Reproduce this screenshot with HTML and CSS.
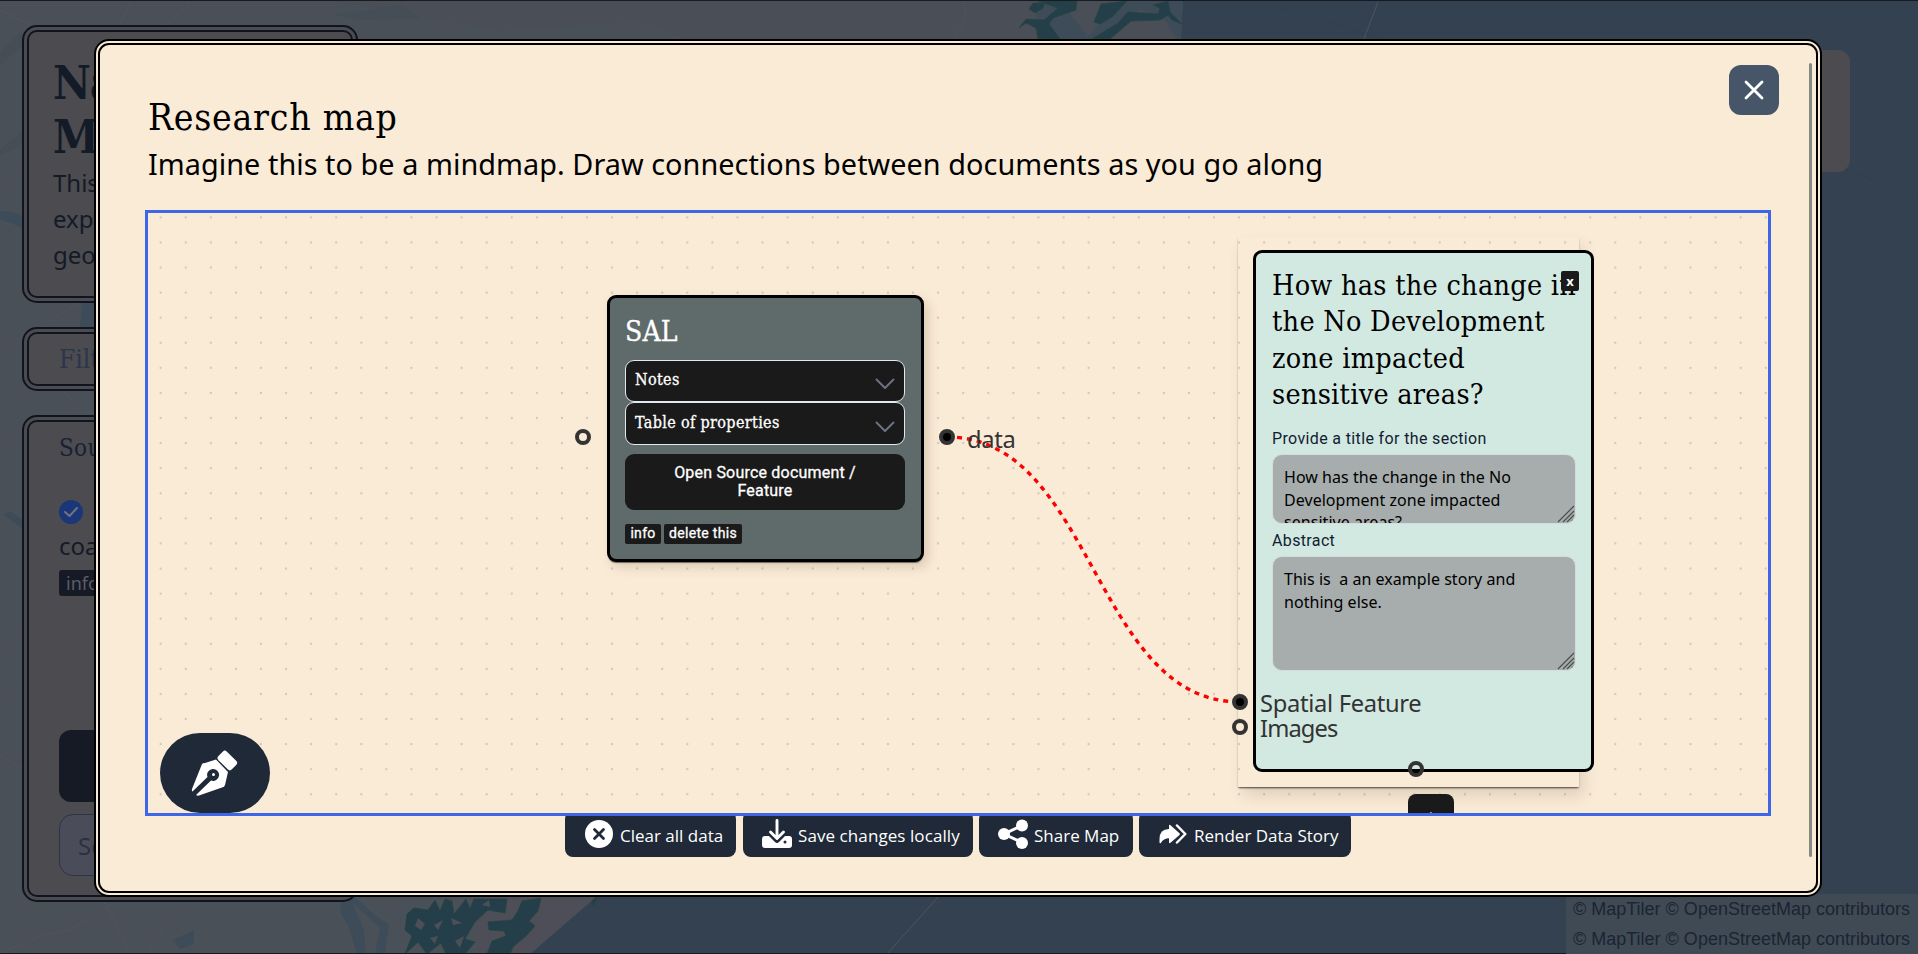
FILE: index.html
```html
<!DOCTYPE html>
<html lang="en">
<head>
<meta charset="utf-8">
<title>Research map</title>
<link rel="stylesheet" href="styles.css">
</head>
<body>
<div class="page">
  <svg class="basemap" viewBox="0 0 1918 954" aria-hidden="true">
    <rect width="1918" height="954" fill="#334150"/>
    <path d="M0 0H1183L1180 60L900 500L596 897L530 954H0Z" fill="#495058"/>
    <path d="M330 0H1183L1180 45H700L640 20L500 30Z" fill="#4a4e56"/>
    <path d="M470 897H596L530 954H480Z" fill="#4d4e57"/>
    <g fill="#3d4c58">
      <path d="M1035 5L1060 0L1090 40H1040ZM1140 10L1100 40H1085L1120 0H1183L1180 45L1165 20Z"/>
      <path d="M340 905L352 895L375 915L389 925L385 954H357L348 925L341 914Z"/>
      <path d="M173 940L194 930V944L180 949Z"/>
      <path d="M0 211Q14 210 23 217V229Q12 222 0 220ZM82 303H94V327H80ZM4 515L10 511L23 520V529Z"/>
    </g>
    <path d="M0 52L23 30V45L0 65ZM332 15L400 5L420 18L360 20ZM0 150L23 130V145L0 155Z" fill="#454e56"/>
    <path d="M352 902L380 928L375 954H366L364 930Z" fill="#4a5058"/>
    <g fill="#243f49" stroke="#25463f" stroke-width=".8">
      <path d="M1033 3H1045L1042 9L1035 13L1029 9ZM1038 1H1077L1076 10L1053 18L1049 24L1060 39H1038L1036 28L1026 23L1019 28L1026 19L1044 20L1058 8ZM1101 4L1119 2L1127 1L1112 17L1100 24L1094 22ZM1128 12L1158 14L1160 8L1153 5L1168 1L1170 12L1182 24L1172 20L1168 15L1160 20L1131 21L1110 39H1092L1118 23Z"/>
      <path d="M407 914L414 908L428 910L435 900L440 911L445 899L452 901L454 914L466 899L470 909L474 899H507L505 913L488 910L475 922L465 939L475 942L465 954H446L441 943L427 954L418 942L405 954L412 936L405 930ZM522 901L541 898L538 911L529 921L535 926L526 936L513 947L510 954H487L492 941L506 936L504 931L489 930L488 922L512 920L518 911ZM591 902L597 896L594 906Z"/>
    </g>
    <g fill="#4b5058"><path d="M418 918L425 924L421 930L415 926ZM434 925L443 920L438 930ZM451 918L462 923L453 925ZM455 941L464 936L460 948ZM430 938L438 936L435 944ZM482 905L489 900L490 907Z"/></g>
    <g fill="none" stroke="#53525d" stroke-width="1">
      <path d="M0 954Q40 933 70 930Q95 915 115 902M105 902L129 952M146 954L182 903M0 660L10 648L22 630M0 700L23 684M0 754L10 762L23 768M0 190L22 165M0 350L80 303M65 392L80 410M0 10L30 25M120 24L131 1M165 25Q185 12 190 0M0 450L23 430M963 0L966 18L955 39"/>
      <path d="M1378 2L1364 39M938 897L887 954"/>
    </g>
    <path d="M1280 8L1420 50M1846 170L1918 196" stroke="#2d3e4c" stroke-dasharray="2 3"/>
    <path d="M0 .5H1918M0 953.5H1918" stroke="#171a20"/>
  </svg>

  <aside class="sidebar">
    <section class="panel panel-intro">
      <h1>Na<br>M</h1>
      <p>This<br>exp<br>geo</p>
    </section>
    <section class="panel panel-filter"><span>Filt</span></section>
    <section class="panel panel-sources">
      <h2>Sou</h2>
      <svg class="check" viewBox="0 0 24 24"><circle cx="12" cy="12" r="12" fill="#1b3779"/><path d="M6 12L10.5 16L18 8" fill="none" stroke="#72737c" stroke-width="2" stroke-linecap="round" stroke-linejoin="round"/></svg>
      <p>coa</p>
      <span class="tag">info</span>
      <div class="block"></div>
      <div class="field">Se</div>
    </section>
  </aside>
  <div class="side-card"></div>
  <div class="attribution"><span>© MapTiler © OpenStreetMap contributors</span><span>© MapTiler © OpenStreetMap contributors</span></div>

  <main class="modal">
    <header class="modal-head">
      <h2>Research map</h2>
      <p>Imagine this to be a mindmap. Draw connections between documents as you go along</p>
    </header>
    <button class="close" aria-label="Close"><svg viewBox="0 0 50 50"><path d="M17 17L33 33M33 17L17 33" stroke="#fff" stroke-width="2.8" stroke-linecap="round"/></svg></button>
    <div class="scrollbar"></div>

    <div class="canvas">
      <svg class="dots" width="1620" height="600">
        <defs><pattern id="dot" x="0.15" y="-8.15" width="25.08" height="25.08" patternUnits="userSpaceOnUse"><circle cx="12.5" cy="12.5" r="1.15" fill="#d4c7ba"/></pattern></defs>
        <rect width="1620" height="600" fill="url(#dot)"/>
      </svg>

      <div class="story-wrap"></div>
      <svg class="edges" width="1620" height="600"><path d="M799 224C945.500 224 945.500 489 1092 489" fill="none" stroke="#f00" stroke-width="3.4" stroke-dasharray="5"/></svg>

      <article class="node sal">
        <h3>SAL</h3>
        <div class="fold"><span>Notes</span><svg viewBox="0 0 20 12"><path d="M1.500 1.500L10 10L18.500 1.500"/></svg></div>
        <div class="fold"><span>Table of properties</span><svg viewBox="0 0 20 12"><path d="M1.500 1.500L10 10L18.500 1.500"/></svg></div>
        <button class="open">Open Source document /<br>Feature</button>
        <div class="chips"><span class="chip">info</span><span class="chip chip-delete">delete this</span></div>
      </article>

      <article class="node story">
        <h3>How has the change in<br>the No Development<br>zone impacted<br>sensitive areas?</h3>
        <button class="remove">x</button>
        <label>Provide a title for the section</label>
        <div class="area area-title">How has the change in the No<br>Development zone impacted<br>sensitive areas?<svg viewBox="0 0 18 18"><path d="M1 17L17 1M6 17L17 6M10 17L17 10M14 17L17 14"/></svg></div>
        <label>Abstract</label>
        <div class="area area-abstract">This is&nbsp; a an example story and<br>nothing else.<svg viewBox="0 0 18 18"><path d="M1 17L17 1M6 17L17 6M10 17L17 10M14 17L17 14"/></svg></div>
      </article>

      <i class="handle h-in"></i>
      <i class="handle h-out linked"></i>
      <i class="handle h-spatial linked"></i>
      <i class="handle h-images"></i>
      <i class="handle h-bottom"></i>
      <span class="port p-data">data</span>
      <span class="port p-spatial">Spatial Feature</span>
      <span class="port p-images">Images</span>
      <button class="add">+</button>

      <button class="pen" aria-label="Draw">
        <svg viewBox="0 0 110 80"><g fill="#fff"><path d="M42 31Q43 30 45 30L56 26.500L68 39L65 52Q64.500 54 62 54.500L39 62.500Q36 63 36.500 61.500L51 47.500A6 6 0 1 0 47.500 44L33 58Q31.500 59.500 32 56Z"/><rect x="-9.500" y="-6" width="19" height="12" rx="3" transform="translate(67.300 27.500) rotate(45)"/><circle cx="53.500" cy="41.500" r="1.500"/></g></svg>
      </button>
    </div>

    <nav class="toolbar">
      <button class="tool t-clear"><svg viewBox="0 0 28 28"><circle cx="14" cy="14" r="14" fill="#fff"/><path d="M9.500 9.500L18.500 18.500M18.500 9.500L9.500 18.500" stroke="#1f2937" stroke-width="2.800" stroke-linecap="round"/></svg><span>Clear all data</span></button>
      <button class="tool t-save"><svg viewBox="0 0 30 30"><path d="M3 17H7L13 23Q15 25 17 23L23 17H27Q30 17 30 20V26Q30 29 27 29H3Q0 29 0 26V20Q0 17 3 17Z" fill="#fff"/><path d="M15 1.500V19M8.500 13L15 19.500L21.500 13" fill="none" stroke="#1f2937" stroke-width="6"/><path d="M15 1.500V19M8.500 13L15 19.500L21.500 13" fill="none" stroke="#fff" stroke-width="2.900" stroke-linecap="round" stroke-linejoin="round"/><circle cx="23" cy="23" r="1.500" fill="#1f2937"/></svg><span>Save changes locally</span></button>
      <button class="tool t-share"><svg viewBox="0 0 30 30"><path d="M24 6.500L6 15L24 23.500" fill="none" stroke="#fff" stroke-width="3"/><g fill="#fff"><circle cx="24" cy="6.500" r="6"/><circle cx="6" cy="15" r="6"/><circle cx="24" cy="24" r="6"/></g></svg><span>Share Map</span></button>
      <button class="tool t-render"><svg viewBox="0 0 28 28"><path d="M.5 22.500V19Q.5 9 10 9V5.800Q10 4 11.500 5.200L20.500 13.200Q21.300 14 20.500 14.900L11.500 22.800Q10 24 10 22V18.300Q4.500 18.300 2 22.800Q.8 24 .5 22.500Z" fill="#fff"/><path d="M18 5.500L26.300 14L18 22.500" fill="none" stroke="#fff" stroke-width="2.500" stroke-linecap="round" stroke-linejoin="round"/></svg><span>Render Data Story</span></button>
    </nav>
  </main>
</div>
</body>
</html>
```
FILE: styles.css
```css
* { box-sizing: border-box; }
body { margin: 0; font-family: "Noto Sans", "Open Sans", sans-serif; }
h1, h2, h3, p { margin: 0; font-weight: 400; }
h1, h2, h3, .panel-filter, .fold { font-family: "DejaVu Serif Condensed", "DejaVu Serif", serif; font-stretch: condensed; }
button { border: 0; padding: 0; color: #fff; font-family: inherit; }

.page { position: relative; width: 1918px; height: 954px; overflow: hidden; background: #334150; }
.basemap { position: absolute; inset: 0; width: 1918px; height: 954px; }

.sidebar { position: relative; width: 336px; margin-left: 22px; padding-top: 25px; display: flex; flex-direction: column; gap: 24px; color: #131a28; }
.panel { border: 7px double #0f1420; border-radius: 15px; background: #4c4b4f; overflow: hidden; }
.panel-intro { height: 278px; padding: 23px 24px; }
.panel-intro h1 { font-size: 46px; line-height: 54px; font-weight: 700; margin-bottom: -5px; padding-top: 1px; letter-spacing: -1px; }
.panel-intro p { font-size: 24px; line-height: 36px; padding-top: 6px; }
.panel-filter { height: 64px; padding: 8px 30px; font-size: 26px; line-height: 34px; color: #2a364b; }
.panel-sources { height: 487px; padding: 10px 30px; display: flex; flex-direction: column; align-items: flex-start; }
.panel-sources h2 { font-size: 24px; line-height: 32px; color: #172136; letter-spacing: .3px; }
.check { width: 24px; height: 24px; margin-top: 36px; }
.panel-sources p { font-size: 24px; line-height: 34px; margin-top: 5px; }
.tag { height: 26px; width: 60px; margin-top: 7px; padding-left: 7px; border-radius: 3px; background: #161a25; color: #5a5d67; font-size: 18px; line-height: 27px; }
.block { width: 276px; height: 72px; margin-top: 134px; border-radius: 12px; background: #161a25; flex: none; }
.field { width: 276px; height: 62px; margin-top: 12px; padding-left: 18px; border: 1px solid #2d3448; border-radius: 14px; background: #4a4d59; color: #2b3140; font-size: 24px; line-height: 61px; flex: none; }

.side-card { position: absolute; left: 1700px; top: 50px; width: 150px; height: 122px; border-radius: 12px; background: #4c4b4f; }
.attribution { position: absolute; right: 0; bottom: 0; width: 352px; height: 60px; padding-left: 7px; display: flex; flex-direction: column; background: #3f4a55; color: #1c2432; font: 18px/30px "Liberation Sans", sans-serif; white-space: nowrap; }

.modal { position: absolute; left: 94px; top: 39px; width: 1728px; height: 858px; padding: 0 45px; border: 6px double #000; border-radius: 15px; background: #faebd7; color: #000; }
.modal-head { height: 165px; padding: 49px 3px 0; }
.modal-head h2 { font-size: 37px; line-height: 48px; margin-bottom: 2px; letter-spacing: .75px; }
.modal-head p { font-size: 28.800px; line-height: 40px; letter-spacing: .055px; white-space: nowrap; }
.close { position: absolute; right: 37px; top: 20px; width: 50px; height: 50px; border-radius: 12px; background: #475569; }
.close svg { display: block; }
.scrollbar { position: absolute; right: 4px; top: 18px; width: 3px; height: 794px; border-radius: 2px; background: #898984; }

.canvas { position: relative; z-index: 1; width: 1626px; height: 606px; border: 3px solid #3d67e8; background: #faebd7; overflow: hidden; }
.dots, .edges { position: absolute; left: 0; top: 0; }
.node { position: absolute; border: 3px solid #000; border-radius: 9px; }
.sal { left: 459px; top: 82px; width: 317px; height: 267px; padding: 16px 15px 0; background: #5f6b6a; color: #fff; box-shadow: 0 2px 1px -1px rgba(0,0,0,.5), 4px 5px 12px rgba(70,50,20,.18); }
.sal h3 { font-size: 28px; line-height: 36px; margin-bottom: 10px; letter-spacing: .2px; -webkit-text-stroke: .3px; }
.fold { display: flex; align-items: center; justify-content: space-between; width: 280px; height: 42px; padding: 0 9px 3px 9px; border: 1px solid #e2e8f0; border-radius: 9px; background: #1a1a1a; font-size: 16px; letter-spacing: .35px; -webkit-text-stroke: .3px; }
.fold + .fold { height: 43px; padding-bottom: 3px; }
.fold svg { width: 20px; height: 12px; margin-top: 9px; fill: none; stroke: #6b7280; stroke-width: 2; stroke-linecap: round; stroke-linejoin: round; }
.open { display: block; width: 280px; height: 56px; margin-top: 9px; border-radius: 9px; background: #1a1a1a; font: 400 16px/18px Roboto, sans-serif; letter-spacing: .2px; -webkit-text-stroke: .3px; }
.chips { display: flex; gap: 3px; margin-top: 14px; }
.chip { width: 36px; height: 20px; border-radius: 2px; background: #1a1a1a; text-align: center; font: 400 14px/19px Roboto, sans-serif; letter-spacing: .3px; -webkit-text-stroke: .3px; white-space: nowrap; }
.chip-delete { width: 78px; }

.story-wrap { position: absolute; left: 1090px; top: 24px; width: 341px; height: 550px; box-shadow: 0 2px 2px -1px rgba(0,0,0,.55), 0 1px 1px rgba(0,0,0,.22), 5px 9px 14px rgba(70,50,20,.14); }
.story { left: 1105px; top: 37px; width: 341px; height: 522px; padding: 15px 16px 0; background: #d2e9e2; }
.story h3 { font-size: 28.500px; line-height: 36.300px; white-space: nowrap; letter-spacing: .28px; }
.remove { position: absolute; right: 12px; top: 18px; width: 18px; height: 20px; border-radius: 2px; background: #1a1a1a; font: 700 13px/18px "Noto Sans", sans-serif; }
.story label { display: block; margin-top: 14px; font: 16px/24px Roboto, sans-serif; letter-spacing: .36px; color: #111c31; }
.area + label { margin-top: 5px; }
.area { position: relative; width: 304px; margin-top: 3px; padding: 11px 11px; border: 1px solid #d5dcd9; border-radius: 10px; background: #a6adac; font-size: 16px; line-height: 22.400px; letter-spacing: .04px; overflow: hidden; white-space: nowrap; }
.area-title { height: 70px; }
.area-abstract { height: 115px; line-height: 23px; }
.area svg { position: absolute; right: 0; bottom: 0; width: 18px; height: 18px; stroke: #4a4f4f; stroke-width: 1.200; }

.handle { position: absolute; width: 16px; height: 16px; border: 4.500px solid #333; border-radius: 50%; background: #faebd7; }
.linked { background: #000; }
.h-in { left: 427px; top: 216px; }
.h-out { left: 791px; top: 216px; }
.h-spatial { left: 1084px; top: 481px; }
.h-images { left: 1084px; top: 506px; }
.h-bottom { left: 1260px; top: 548px; background: linear-gradient(#d2e9e2 50%, #000 50%); }
.port { position: absolute; font-size: 23.700px; line-height: 25px; letter-spacing: -.3px; color: #333; white-space: nowrap; }
.p-data { left: 819px; top: 214px; }
.p-spatial { left: 1112px; top: 478px; }
.p-images { left: 1112px; top: 503px; letter-spacing: -.9px; }
.add { position: absolute; left: 1260px; top: 581px; width: 46px; height: 44px; border-radius: 8px; background: #1a1a1a; font-size: 18px; line-height: 44px; }
.pen { position: absolute; left: 12px; top: 520px; width: 110px; height: 80px; border-radius: 40px; background: #1f2937; }
.pen svg { display: block; }

.toolbar { display: flex; justify-content: center; gap: 6px; width: 1626px; margin-top: -5px; }
.tool { display: flex; align-items: center; height: 46px; padding-left: 20px; border-radius: 8px; background: #1f2937; font: 17px/24px "Open Sans", sans-serif; white-space: nowrap; }
.tool span { padding-top: 4px; }
.tool svg { width: 28px; height: 28px; margin-right: 7px; flex: none; }
.t-clear { width: 171px; margin-right: 1px; }
.t-save { width: 230px; padding-left: 19px; letter-spacing: .08px; }
.t-save svg, .t-share svg { width: 30px; height: 30px; margin-right: 6px; }
.t-share { width: 154px; padding-left: 19px; }
.t-render { width: 212px; }
```
